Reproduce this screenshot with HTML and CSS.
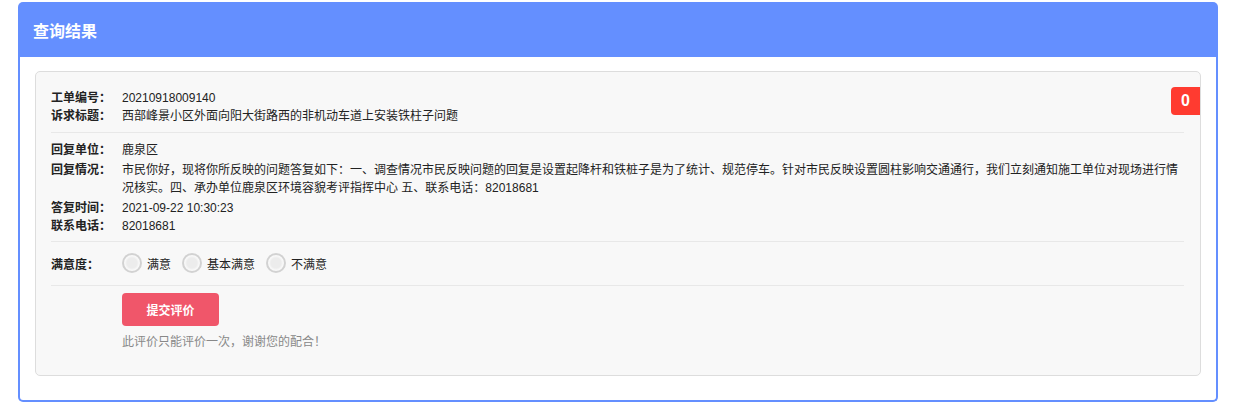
FILE: index.html
```html
<!DOCTYPE html>
<html lang="zh-CN">
<head>
<meta charset="utf-8">
<title>查询结果</title>
<link rel="stylesheet" href="styles.css">
</head>
<body>
<div class="panel">
  <div class="panel-head">查询结果</div>
  <div class="panel-body">
    <div class="card">
      <span class="badge">0</span>
      <div class="section sec-info">
        <div class="row"><span class="label">工单编号：</span><span class="value">20210918009140</span></div>
        <div class="row"><span class="label">诉求标题：</span><span class="value">西部峰景小区外面向阳大街路西的非机动车道上安装铁柱子问题</span></div>
      </div>
      <div class="section sec-reply">
        <div class="row gap"><span class="label">回复单位：</span><span class="value">鹿泉区</span></div>
        <div class="row gap"><span class="label">回复情况：</span><span class="value">市民你好，现将你所反映的问题答复如下：一、调查情况市民反映问题的回复是设置起降杆和铁桩子是为了统计、规范停车。针对市民反映设置圆柱影响交通通行，我们立刻通知施工单位对现场进行情况核实。四、承办单位鹿泉区环境容貌考评指挥中心 五、联系电话：82018681</span></div>
        <div class="row"><span class="label">答复时间：</span><span class="value">2021-09-22 10:30:23</span></div>
        <div class="row"><span class="label">联系电话：</span><span class="value">82018681</span></div>
      </div>
      <div class="section sec-rate">
        <span class="label">满意度：</span>
        <div class="radios">
          <label class="radio"><span class="dot"></span>满意</label>
          <label class="radio"><span class="dot"></span>基本满意</label>
          <label class="radio"><span class="dot"></span>不满意</label>
        </div>
      </div>
      <div class="sec-submit">
        <button class="btn" type="button">提交评价</button>
        <p class="note">此评价只能评价一次，谢谢您的配合！</p>
      </div>
    </div>
  </div>
</div>
</body>
</html>
```
FILE: styles.css
```css
* { box-sizing: border-box; }
html, body { background: #fff; }
body {
  margin: 0;
  padding: 2px 17px 0 18px;
  font-family: "Liberation Sans", "Noto Sans CJK SC", sans-serif;
  font-size: 12px;
  color: #222;
}
.panel {
  width: 1200px;
}
.panel-head {
  height: 55px;
  background: #648fff;
  border-radius: 5px 5px 0 0;
  color: #fff;
  font-size: 16px;
  font-weight: bold;
  display: flex;
  align-items: center;
  padding-left: 15px;
}
.panel-body {
  border: 2px solid #648fff;
  border-top: none;
  border-radius: 0 0 5px 5px;
  padding: 14px 15px 24px;
  height: 345px;
}
.card {
  position: relative;
  background: #f8f8f8;
  border: 1px solid #dddddd;
  border-radius: 5px;
  padding: 0 16px 0 15px;
  height: 305px;
}
.badge {
  position: absolute;
  top: 15px;
  right: 0;
  width: 29px;
  height: 28px;
  background: #ff3b30;
  color: #fff;
  border-radius: 4px 0 0 4px;
  font-size: 16px;
  font-weight: bold;
  display: flex;
  align-items: center;
  justify-content: center;
}
.section {
  border-bottom: 1px solid #e8e8e8;
}
.sec-info { padding: 17px 0 7px; }
.sec-reply { padding: 8px 0 6px; }
.row {
  display: flex;
  line-height: 18px;
}
.row.gap { margin-bottom: 2px; }
.label {
  flex: 0 0 71px;
  font-weight: bold;
  color: #222;
}
.value {
  flex: 1;
  color: #222;
}
.sec-rate {
  display: flex;
  align-items: center;
  padding: 11px 0 12px;
}
.radios {
  display: flex;
  align-items: center;
}
.radio {
  display: flex;
  align-items: center;
  margin-right: 11px;
  color: #222;
}
.dot {
  width: 20px;
  height: 20px;
  border-radius: 50%;
  border: 2px solid #d2d2d2;
  background: radial-gradient(circle, #ececec 0, #ececec 5px, #f8f8f8 7px);
  margin-right: 5px;
}
.sec-submit {
  padding: 7px 0 0 71px;
}
.btn {
  display: block;
  width: 97px;
  height: 33px;
  border: none;
  border-radius: 4px;
  background: #f0566a;
  color: #fff;
  font-family: inherit;
  font-size: 12px;
  font-weight: bold;
}
.note {
  margin: 7px 0 0;
  line-height: 18px;
  color: #888;
}
```
